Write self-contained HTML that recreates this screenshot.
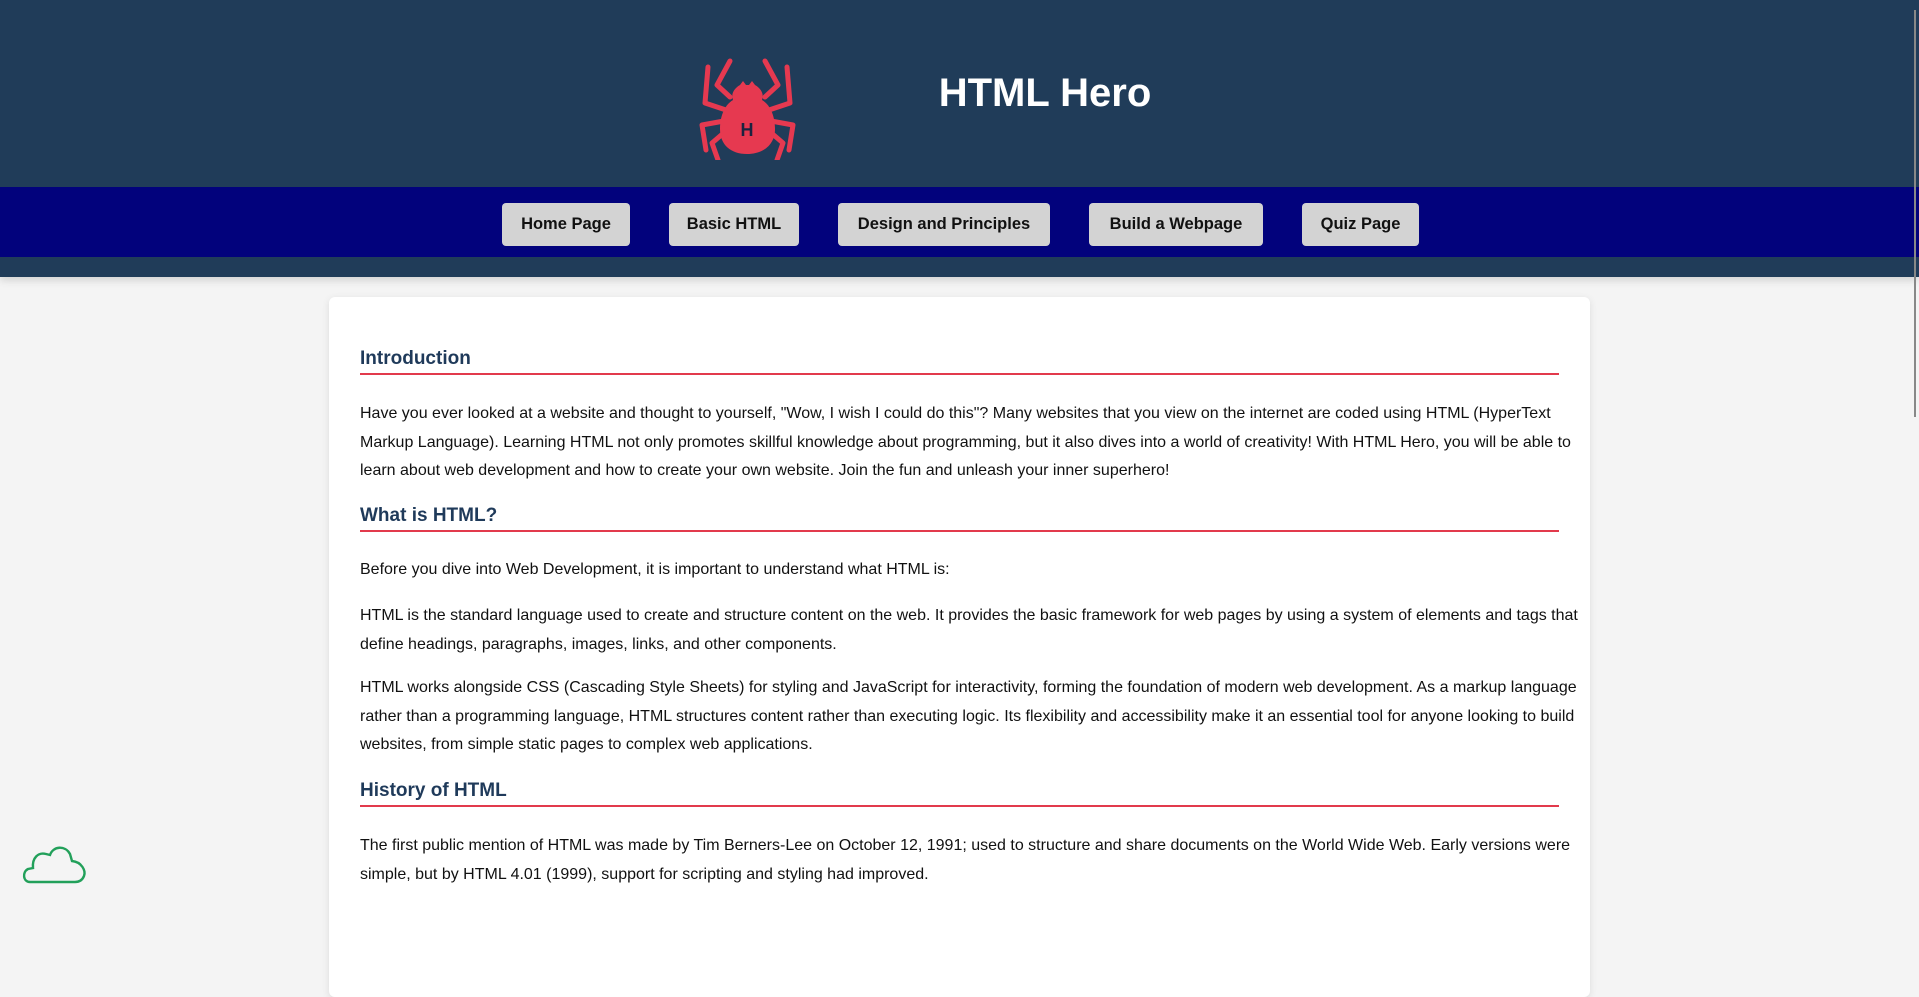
<!DOCTYPE html>
<html><head><meta charset="utf-8"><style>
*{margin:0;padding:0;box-sizing:border-box}
body{width:1919px;height:913px;overflow:hidden;background:#f4f4f4;font-family:"Liberation Sans",sans-serif;position:relative}
.hdr{position:absolute;left:0;top:0;width:1919px;height:277px;background:#203c59;box-shadow:0 3px 8px rgba(0,0,0,.15)}
.nav{position:absolute;left:0;top:187px;width:1919px;height:70px;background:#02027c}
.btn{position:absolute;top:16px;height:43px;background:#d3d3d3;border-radius:4px;font-weight:bold;font-size:16.5px;color:#111;display:flex;align-items:center;justify-content:center}
h1{position:absolute;left:900px;top:71px;width:290px;text-align:center;color:#fff;font-size:40px;font-weight:bold}
.card{position:absolute;left:329px;top:297px;width:1261px;height:700px;background:#fff;border-radius:6px;box-shadow:0 2px 8px rgba(0,0,0,.1)}
.h{position:absolute;left:31px;width:1199px;font-size:19px;font-weight:bold;color:#1f3a5a;border-bottom:2px solid #e23a4c;height:30px;line-height:28px}
.p{position:absolute;left:31px;font-size:16px;color:#111;line-height:28.5px;white-space:nowrap}
</style></head><body>
<div class="hdr">
<svg style="position:absolute;left:690px;top:55px" width="115" height="105" viewBox="0 0 115 105">
<g fill="none" stroke="#e63950" stroke-linecap="round" stroke-linejoin="round">
<path d="M40 42 L27 30 L40 6" stroke-width="5"/>
<path d="M75 42 L88 30 L75 6" stroke-width="5"/>
<path d="M36 55 L15 48 L18 12" stroke-width="5"/>
<path d="M79 55 L100 48 L97 12" stroke-width="5"/>
<path d="M34 66 L12 70 L16 95" stroke-width="5"/>
<path d="M81 66 L103 70 L99 95" stroke-width="5"/>
<path d="M36 76 L22 88 L28 105" stroke-width="5"/>
<path d="M79 76 L93 88 L87 105" stroke-width="5"/>
</g>
<path d="M50 30 L53 26 L56 30 L59 30 L62 26 L65 30 C72 34 74 40 72 45 C82 51 85 64 85 74 C85 90 73 99 57 99 C41 99 30 90 30 74 C30 64 33 51 43 45 C41 40 43 34 50 30Z" fill="#e63950"/>
<text x="57" y="81" text-anchor="middle" font-family="Liberation Sans" font-weight="bold" font-size="18" fill="#1a2340">H</text>
</svg>
<h1>HTML Hero</h1>
<div class="nav">
<div class="btn" style="left:502px;width:128px">Home Page</div>
<div class="btn" style="left:669px;width:130px">Basic HTML</div>
<div class="btn" style="left:838px;width:212px">Design and Principles</div>
<div class="btn" style="left:1089px;width:174px">Build a Webpage</div>
<div class="btn" style="left:1302px;width:117px">Quiz Page</div>
</div>
</div>
<div style="position:absolute;left:1914px;top:10px;width:2px;height:407px;background:#888"></div>
<div class="card">
<div class="h" style="top:48px">Introduction</div>
<div class="p" style="top:103px">Have you ever looked at a website and thought to yourself, "Wow, I wish I could do this"? Many websites that you view on the internet are coded using HTML (HyperText<br>Markup Language). Learning HTML not only promotes skillful knowledge about programming, but it also dives into a world of creativity! With HTML Hero, you will be able to<br>learn about web development and how to create your own website. Join the fun and unleash your inner superhero!</div>
<div class="h" style="top:205px">What is HTML?</div>
<div class="p" style="top:259px">Before you dive into Web Development, it is important to understand what HTML is:</div>
<div class="p" style="top:305px">HTML is the standard language used to create and structure content on the web. It provides the basic framework for web pages by using a system of elements and tags that<br>define headings, paragraphs, images, links, and other components.</div>
<div class="p" style="top:377px">HTML works alongside CSS (Cascading Style Sheets) for styling and JavaScript for interactivity, forming the foundation of modern web development. As a markup language<br>rather than a programming language, HTML structures content rather than executing logic. Its flexibility and accessibility make it an essential tool for anyone looking to build<br>websites, from simple static pages to complex web applications.</div>
<div class="h" style="top:480px">History of HTML</div>
<div class="p" style="top:535px">The first public mention of HTML was made by Tim Berners-Lee on October 12, 1991; used to structure and share documents on the World Wide Web. Early versions were<br>simple, but by HTML 4.01 (1999), support for scripting and styling had improved.</div>
</div>
<svg style="position:absolute;left:20px;top:836px" width="70" height="50" viewBox="0 0 70 50">
<path d="M10 46 C3 46 2 36 8 33 L13 32 C12 22 18 16 26 18 L30 19 C33 10 45 9 50 18 L52 25 C62 26 66 35 64 40 C62 45 58 46 55 46 Z" fill="none" stroke="#22a05a" stroke-width="2.4"/>
</svg>
</body></html>
